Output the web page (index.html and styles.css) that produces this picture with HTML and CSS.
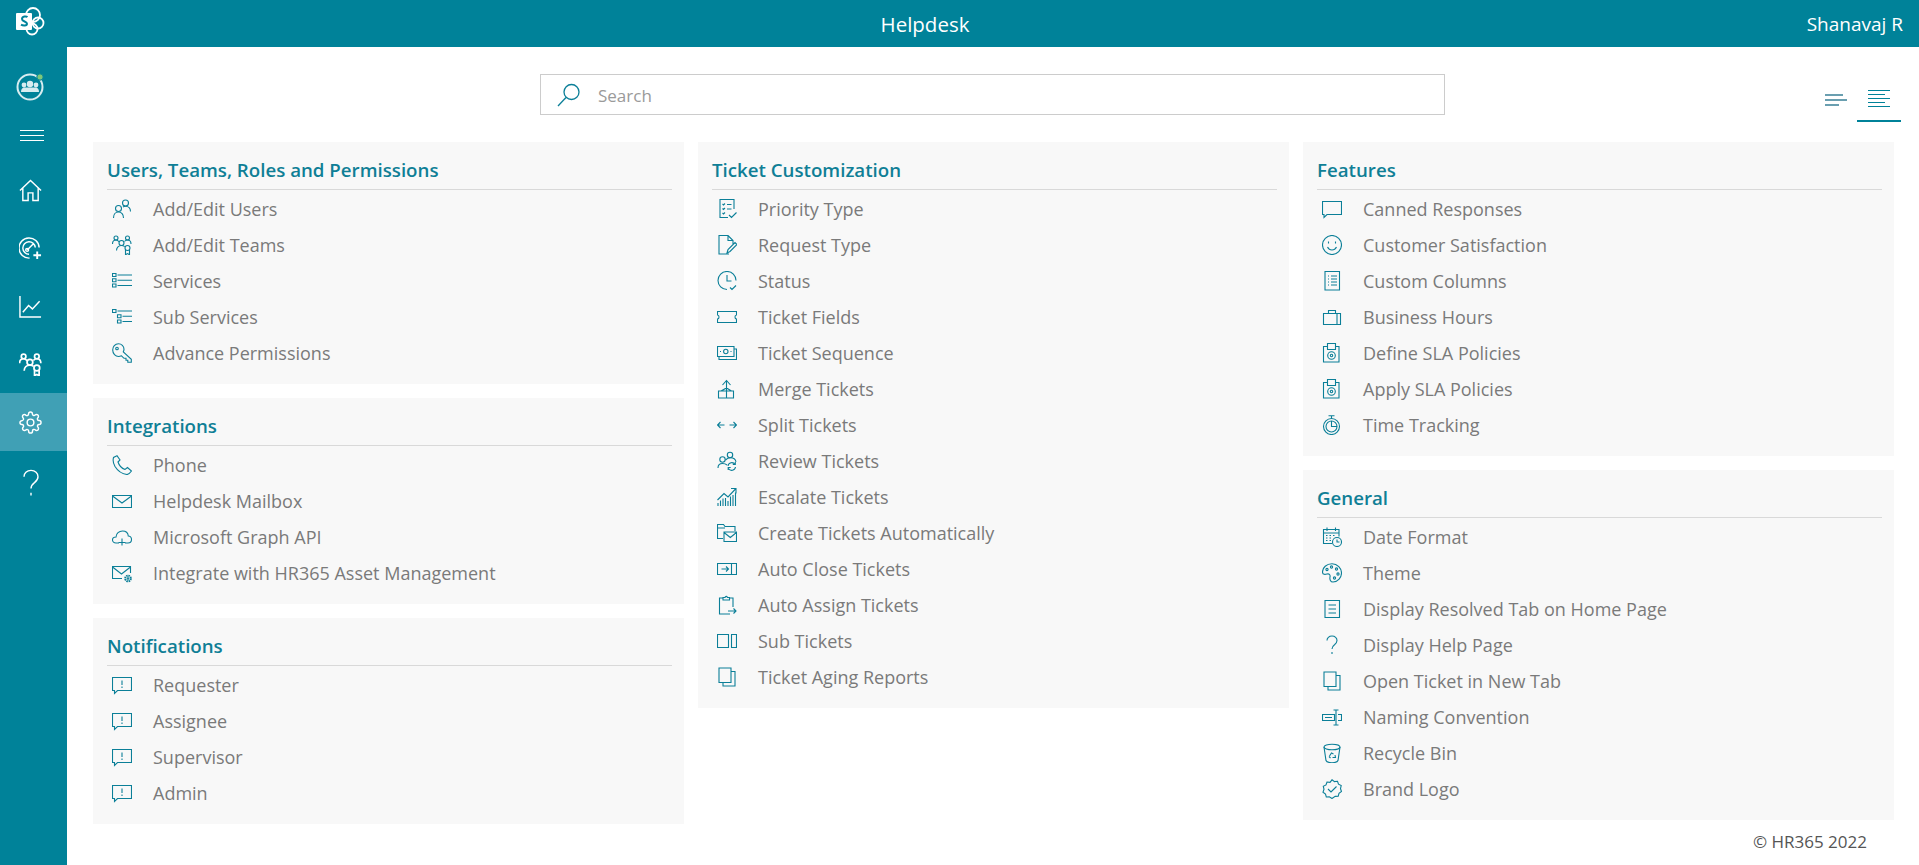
FILE: index.html
```html
<!DOCTYPE html>
<html lang="en">
<head>
    <meta charset="UTF-8">
    <title>Helpdesk</title>
    <link rel="stylesheet" href="styles.css">
</head>
<body>

<svg class="defs" width="0" height="0">
    <symbol id="users" viewBox="0 0 20 20"><circle cx="6.500" cy="9.500" r="3"/><path d="M1.500 19c0-3.500 2-6 5-6s5 2.500 5 6"/><circle cx="13.500" cy="4" r="3"/><path d="M11 8c.7-.6 1.500-.8 2.500-.8 3 0 5 2.300 5 5.300"/></symbol>
    <symbol id="team" viewBox="0 0 20 20"><circle cx="4" cy="3" r="2"/><circle cx="15.500" cy="3" r="2"/><circle cx="9.500" cy="8" r="2.500"/><path d="M.5 9c0-2.500 1.300-4 3.500-4 1.300 0 2.200.6 3 1.800M12.500 6.500c.7-1 1.700-1.500 3-1.500 2.200 0 3.500 1.500 3.500 4M4.500 15.500c0-3 2.200-5 5-5 1.300 0 2.300.4 3.200 1.200"/><circle cx="15.500" cy="13" r="2.500"/><path d="M13.500 15v4.800l2-1.200 2 1.200V15"/></symbol>
    <symbol id="list" viewBox="0 0 20 20"><path d="M.5 2.500h3.500v3H.5zM.5 7.800h3.500v3H.5zM.5 13h3.500v3H.5zM5.500 4H20M5.500 9.300H20M5.500 14.500H20"/></symbol>
    <symbol id="sublist" viewBox="0 0 20 20"><path d="M.5 2.500h3.500v3H.5zM5.500 7.800H9v3H5.500zM5.500 13H9v3H5.500zM5.500 4H20M10.500 9.300H20M10.500 14.500H20"/></symbol>
    <symbol id="key" viewBox="0 0 20 20"><path d="M6.500 .8c3 0 5.500 2.500 5.500 5.500 0 1-.3 1.800-.7 2.500l8 7.500v3h-3.500v-2H14v-2h-2l-2.500-2.500c-.8.4-2 .7-3 .7C3.500 13.500.7 10.500.7 7S3 .8 6.500 .8z"/><circle cx="5" cy="5.500" r="1.300"/></symbol>
    <symbol id="phone" viewBox="0 0 20 20"><path d="M5 .8 1.500 2.500C.8 5 1 8 3 11.500c2.500 4 7 7.500 12 8 1.500 0 3-1.500 4.500-3.500l-4-3.500-2.500 2c-3-1-6-4.500-7-7.500l2-2z"/></symbol>
    <symbol id="mail" viewBox="0 0 20 20"><path d="M.5 4.500h19v12H.5zM.5 5l9.500 7 9.500-7"/></symbol>
    <symbol id="cloud" viewBox="0 0 20 20"><path d="M7 16H4c-2 0-3.500-1.300-3.500-3S2 10 4 10c.2-3.500 3-6 6.500-6 3 0 5.500 2 5.800 5 2 .2 3.200 1.500 3.200 3.500S18 16 16 16h-3M10 11.500v7M6.500 15.500h7"/></symbol>
    <symbol id="mailgear" viewBox="0 0 20 20"><path d="M10 15.500H.5v-12h18V10M.5 4l9 7 9-7"/><circle cx="16" cy="15.500" r="2.800" stroke-width="2" stroke-dasharray="1.500 .7"/><circle cx="16" cy="15.500" r=".8"/></symbol>
    <symbol id="alert" viewBox="0 0 20 20"><path d="M.5 2.500h19v13H5.500l-3 3v-3h-2zM10 5.500V10M10 11.500v1.500"/></symbol>
    <symbol id="priority" viewBox="0 0 20 20"><path d="M17 10V.5H3v18h8M5.500 5l1 1 1.500-1.500M5.500 9.500l1 1L8 9M5.500 14l1 1L8 13.500M10 5.500h4.500M10 10h4.500M12 16l2.500 2.500 5-5"/></symbol>
    <symbol id="req" viewBox="0 0 20 20"><path d="M12 19H2V.5h9l5 5V9M11 .5v5h5M10 18l1-3.500 7-7 2 2-7 7z"/></symbol>
    <symbol id="status" viewBox="0 0 20 20"><path d="M10 18.500A9 9 0 1 1 19 9.500M10 4v6h4.500M13 16.500l2 2 4-4"/></symbol>
    <symbol id="ticket" viewBox="0 0 20 20"><path d="M.5 4.500h19V8c-1 0-1.500.7-1.500 2s.5 2 1.500 2v3.500H.5V12c1 0 1.500-.7 1.500-2S1.500 8 .5 8z"/></symbol>
    <symbol id="money" viewBox="0 0 20 20"><path d="M.5 3.500h16.500v10H.5zM2 13.500v3h17.500V6H17M3 8.500h1M13.500 8.500h1"/><circle cx="8.800" cy="8.500" r="2.200"/></symbol>
    <symbol id="merge" viewBox="0 0 20 20"><path d="M1.500 12h8v7h-8zM9.500 12h7v7h-7zM9.500 12V2M5.500 6l4-4.500 4 4.500M4 12l5.500-3 5 3"/></symbol>
    <symbol id="split" viewBox="0 0 20 20"><path d="M.5 10h7M3.500 7 .5 10l3 3M12.500 10h7M16.500 7l3 3-3 3"/></symbol>
    <symbol id="review" viewBox="0 0 20 20"><circle cx="5.500" cy="8.500" r="2.700"/><circle cx="13" cy="4" r="2.700"/><path d="M1 17c0-3 2-4.500 4.500-4.500S9 13 10 14M8.500 9c1-1 3-2.200 5-2.200 3 0 5 1.500 5.500 4M11 15a3.800 3.800 0 0 1 7-1.500M18.500 16a3.800 3.800 0 0 1-7 1.500M18.300 11v2.500h-2.500M11.200 19v-2.500h2.500"/></symbol>
    <symbol id="escalate" viewBox="0 0 20 20"><path d="M1 19v-3M3.500 19v-5.500M6 19v-7.500M8.500 19v-8M11 19v-5M13.500 19V9.500M16 19V8M18.500 19V5.500M.5 13 7 6.500 11 10l7.500-8M14 1.500h5v5"/></symbol>
    <symbol id="foldermail" viewBox="0 0 20 20"><path d="M6 15.500H.5V1.500h6l1.500 2h10V8M.5 5H8"/><path d="M7 9h12.500v9.500H7zM7 9.500l6.300 5 6.200-5"/></symbol>
    <symbol id="autoclose" viewBox="0 0 20 20"><path d="M.5 4.500h19v11H.5zM14.500 4.500v11M4.500 10h7M9 7.500l2.500 2.500L9 12.500"/></symbol>
    <symbol id="assign" viewBox="0 0 20 20"><path d="M6 3H2.500v16H13M16 12V3h-3.500M6 5V2.500h2C8.500 1 9.800 1 10.500 2.500h2V5zM11 16h8M16.500 13.500 19 16l-2.500 2.500"/></symbol>
    <symbol id="sub" viewBox="0 0 20 20"><path d="M.5 3.500h11v13H.5zM14.500 3.500h5v13h-5z"/></symbol>
    <symbol id="copy" viewBox="0 0 20 20"><path d="M2 1h12v14.500H2zM14 4.500h4V19H6v-3.500"/></symbol>
    <symbol id="chat" viewBox="0 0 20 20"><path d="M.5 2.500h19v13H5l-3 3v-3H.5z"/></symbol>
    <symbol id="smile" viewBox="0 0 20 20"><circle cx="10" cy="10" r="9.500"/><path d="M5.500 12c1 2 2.500 3 4.500 3s3.500-1 4.500-3M6.500 6.500v2M13.500 6.500v2"/></symbol>
    <symbol id="columns" viewBox="0 0 20 20"><path d="M3 .5h14.500v18.500H3zM6 5h1M9 5h6M6 8h1M9 8h6M6 11h1M9 11h6M6 14h1M9 14h6"/></symbol>
    <symbol id="brief" viewBox="0 0 20 20"><path d="M1.500 6.500h17v11h-17zM6.500 6.500v-3h7v3M15 6.500v11"/></symbol>
    <symbol id="sla" viewBox="0 0 20 20"><path d="M5.500 3.500h-4V19h15.500V3.500h-3M5.500 6.500V.5h8v6z"/><circle cx="9.500" cy="12.500" r="3.800"/><circle cx="9.500" cy="12.500" r="1.200"/></symbol>
    <symbol id="timer" viewBox="0 0 20 20"><path d="M6.500 .8h6M9.500 .8v3"/><circle cx="9.500" cy="11.500" r="8"/><circle cx="9.500" cy="11.500" r="5.500"/><path d="M9.500 6v5.500H15"/></symbol>
    <symbol id="calendar" viewBox="0 0 20 20"><path d="M10 16.500H1.500V2.500h15.500v7M1.500 6h15.500M5 .5v3.500M13.500 .5v3.500M4 8.500h1.500M7.500 8.500H9M11 8.500h1.500M4 11h1.500M7.500 11H9M4 13.500h1.500M7.500 13.500H9"/><circle cx="15" cy="15" r="4.500"/><path d="M15 12.500V15h2.500"/></symbol>
    <symbol id="palette" viewBox="0 0 20 20"><path d="M10 .8C4.500 .8.500 4.500.5 9c0 3 3 2.500 4.500 2 2-.5 3.500.5 3 3-.5 2.500.5 5 3 5 5 0 8.500-4.500 8.500-9S15.500 .8 10 .8z"/><circle cx="5" cy="6.500" r="1.100"/><circle cx="9.500" cy="4" r="1.100"/><circle cx="14.500" cy="6" r="1.100"/><circle cx="16" cy="11" r="1.100"/><circle cx="12.500" cy="15" r="1.100"/></symbol>
    <symbol id="doc" viewBox="0 0 20 20"><path d="M3 1.500h14.500v17H3zM6.500 6h7.500M6.500 10h7.500M6.500 14h7.500"/></symbol>
    <symbol id="question" viewBox="0 0 20 20"><path d="M5 5.500C5 3 7 1 10 1s5 2 5 4.500c0 2-1 3-2.500 4.200-1.500 1.100-2.500 2-2.500 4.300M10 17v2"/></symbol>
    <symbol id="naming" viewBox="0 0 20 20"><path d="M.5 7.500h12v6H.5zM3 10.500h7M14 3v15M11.500 3h5M11.500 18h5M16 7.500h3.500v6H16"/></symbol>
    <symbol id="bin" viewBox="0 0 20 20"><ellipse cx="10" cy="4" rx="8" ry="2.800"/><path d="M2 4l2 13.500c.5 1.500 3 2.200 6 2.200s5.500-.7 6-2.200L18 4M7.500 13l2-3 2 1M13 12l.5 2.500h-3M7 13.500l1.500 1.500"/></symbol>
    <symbol id="brand" viewBox="0 0 20 20"><path d="M10 .8l2.500 1.800 3-.3 1 2.900 2.700 1.400-.7 3 1 2.900-2.500 1.800-.8 3-3 .1L10 19.500l-2.700-1.600-3 .1-.8-3-2.500-1.800 1-2.900-.7-3 2.700-1.400 1-2.900 3 .3z"/><path d="M6 10l3 3 5.500-5.500"/></symbol>
    <symbol id="home" viewBox="0 0 24 24"><path d="M1 12 12 1.500 23 12M4 9.500V22.500h5.500v-8h5v8H20V9.500"/></symbol>
    <symbol id="gauge" viewBox="0 0 24 24"><path d="M21 11A10.500 10.500 0 1 0 11 22M17 11a6.500 6.500 0 1 0-6.500 7M8.500 13.500l6-6"/><circle cx="8.500" cy="13.500" r="1.500"/><path d="M19 15v8M15 19h8" stroke-width="2"/></symbol>
    <symbol id="chart" viewBox="0 0 24 24"><path d="M1 1v22h22M4 18l6-7 4 3.500 7.500-8"/></symbol>
    <symbol id="gear" viewBox="0 0 24 24"><circle cx="12" cy="12" r="3.500"/><path d="M19.400 15a1.650 1.650 0 0 0 .33 1.820l.06.06a2 2 0 0 1 0 2.830 2 2 0 0 1-2.830 0l-.06-.06a1.650 1.650 0 0 0-1.820-.33 1.650 1.650 0 0 0-1 1.510V21a2 2 0 0 1-2 2 2 2 0 0 1-2-2v-.09A1.650 1.650 0 0 0 9 19.400a1.650 1.650 0 0 0-1.820.33l-.06.06a2 2 0 0 1-2.830 0 2 2 0 0 1 0-2.830l.06-.06a1.650 1.650 0 0 0 .33-1.820 1.650 1.650 0 0 0-1.510-1H3a2 2 0 0 1-2-2 2 2 0 0 1 2-2h.09A1.650 1.650 0 0 0 4.600 9a1.650 1.650 0 0 0-.33-1.820l-.06-.06a2 2 0 0 1 0-2.830 2 2 0 0 1 2.830 0l.06.06a1.650 1.650 0 0 0 1.820.33H9a1.650 1.650 0 0 0 1-1.510V3a2 2 0 0 1 2-2 2 2 0 0 1 2 2v.09a1.650 1.650 0 0 0 1 1.510 1.650 1.650 0 0 0 1.820-.33l.06-.06a2 2 0 0 1 2.830 0 2 2 0 0 1 0 2.830l-.06.06a1.650 1.650 0 0 0-.33 1.820V9a1.650 1.650 0 0 0 1.510 1H21a2 2 0 0 1 2 2 2 2 0 0 1-2 2h-.09a1.650 1.650 0 0 0-1.510 1z"/></symbol>
</svg>

<aside class="sidebar">
    <div class="logo">
        <svg width="30" height="30" viewBox="0 0 30 30">
            <circle cx="18" cy="8" r="7" fill="none" stroke="#fff" stroke-width="1.800"/>
            <circle cx="23" cy="16" r="5.500" fill="none" stroke="#fff" stroke-width="1.800"/>
            <circle cx="17" cy="22" r="5.500" fill="none" stroke="#fff" stroke-width="1.800"/>
            <rect x="1" y="6" width="16" height="17" rx="1" fill="#fff"/>
            <path d="M12.500 10c-1-.8-5.500-1.200-5.500 2 0 2.800 5 2.200 5 4.700 0 2.300-4 2.200-6 1" fill="none" stroke="#00829b" stroke-width="2"/>
        </svg>
    </div>
    <div class="avatar">
        <svg width="30" height="30" viewBox="0 0 30 30">
            <circle cx="15" cy="15" r="12.500" fill="none" stroke="#d7ecf0" stroke-width="2"/>
            <circle cx="15" cy="12" r="3.200" fill="#d7ecf0"/>
            <circle cx="9" cy="13" r="2.400" fill="#d7ecf0"/>
            <circle cx="21" cy="13" r="2.400" fill="#d7ecf0"/>
            <path d="M6 20c0-3 1.500-4.500 3-4.500h12c1.500 0 3 1.500 3 4.500z" fill="#d7ecf0"/>
            <circle cx="25" cy="5" r="3.200" fill="#7fc77a" stroke="#008299"/>
        </svg>
    </div>
    <div class="burger"><span></span><span></span><span></span></div>
    <a class="nav-item"><svg class="nav-ic"><use href="#home"/></svg></a>
    <a class="nav-item"><svg class="nav-ic"><use href="#gauge"/></svg></a>
    <a class="nav-item"><svg class="nav-ic"><use href="#chart"/></svg></a>
    <a class="nav-item"><svg class="nav-ic"><use href="#team"/></svg></a>
    <a class="nav-item active"><svg class="nav-ic"><use href="#gear"/></svg></a>
    <a class="nav-item"><svg class="nav-ic tall"><use href="#question"/></svg></a>
</aside>

<div class="page">
    <header class="topbar">
        <div class="app-title">Helpdesk</div>
        <div class="user-name">Shanavaj R</div>
    </header>

    <main class="content">
        <div class="search-row">
            <div></div>
            <div class="search-box">
                <svg class="search-ic" viewBox="0 0 24 24"><circle cx="14.500" cy="9" r="7.500"/><path d="M9 14.500 1 23"/></svg>
                <span class="search-text">Search</span>
            </div>
            <div class="view-toggle">
                <div class="toggle-btn">
                    <span class="ln w18"></span><span class="ln w22"></span><span class="ln w14"></span>
                </div>
                <div class="toggle-btn active">
                    <span class="ln w22"></span><span class="ln w17"></span><span class="ln w22"></span><span class="ln w17"></span><span class="ln w22"></span>
                </div>
            </div>
        </div>

        <div class="columns">
            <div class="col">
                <section class="card">
                    <h2>Users, Teams, Roles and Permissions</h2>
                    <a class="row"><svg class="ic"><use href="#users"/></svg>Add/Edit Users</a>
                    <a class="row"><svg class="ic"><use href="#team"/></svg>Add/Edit Teams</a>
                    <a class="row"><svg class="ic"><use href="#list"/></svg>Services</a>
                    <a class="row"><svg class="ic"><use href="#sublist"/></svg>Sub Services</a>
                    <a class="row"><svg class="ic"><use href="#key"/></svg>Advance Permissions</a>
                </section>
                <section class="card">
                    <h2>Integrations</h2>
                    <a class="row"><svg class="ic"><use href="#phone"/></svg>Phone</a>
                    <a class="row"><svg class="ic"><use href="#mail"/></svg>Helpdesk Mailbox</a>
                    <a class="row"><svg class="ic"><use href="#cloud"/></svg>Microsoft Graph API</a>
                    <a class="row"><svg class="ic"><use href="#mailgear"/></svg>Integrate with HR365 Asset Management</a>
                </section>
                <section class="card">
                    <h2>Notifications</h2>
                    <a class="row"><svg class="ic"><use href="#alert"/></svg>Requester</a>
                    <a class="row"><svg class="ic"><use href="#alert"/></svg>Assignee</a>
                    <a class="row"><svg class="ic"><use href="#alert"/></svg>Supervisor</a>
                    <a class="row"><svg class="ic"><use href="#alert"/></svg>Admin</a>
                </section>
            </div>

            <div class="col">
                <section class="card">
                    <h2>Ticket Customization</h2>
                    <a class="row"><svg class="ic"><use href="#priority"/></svg>Priority Type</a>
                    <a class="row"><svg class="ic"><use href="#req"/></svg>Request Type</a>
                    <a class="row"><svg class="ic"><use href="#status"/></svg>Status</a>
                    <a class="row"><svg class="ic"><use href="#ticket"/></svg>Ticket Fields</a>
                    <a class="row"><svg class="ic"><use href="#money"/></svg>Ticket Sequence</a>
                    <a class="row"><svg class="ic"><use href="#merge"/></svg>Merge Tickets</a>
                    <a class="row"><svg class="ic"><use href="#split"/></svg>Split Tickets</a>
                    <a class="row"><svg class="ic"><use href="#review"/></svg>Review Tickets</a>
                    <a class="row"><svg class="ic"><use href="#escalate"/></svg>Escalate Tickets</a>
                    <a class="row"><svg class="ic"><use href="#foldermail"/></svg>Create Tickets Automatically</a>
                    <a class="row"><svg class="ic"><use href="#autoclose"/></svg>Auto Close Tickets</a>
                    <a class="row"><svg class="ic"><use href="#assign"/></svg>Auto Assign Tickets</a>
                    <a class="row"><svg class="ic"><use href="#sub"/></svg>Sub Tickets</a>
                    <a class="row"><svg class="ic"><use href="#copy"/></svg>Ticket Aging Reports</a>
                </section>
            </div>

            <div class="col">
                <section class="card">
                    <h2>Features</h2>
                    <a class="row"><svg class="ic"><use href="#chat"/></svg>Canned Responses</a>
                    <a class="row"><svg class="ic"><use href="#smile"/></svg>Customer Satisfaction</a>
                    <a class="row"><svg class="ic"><use href="#columns"/></svg>Custom Columns</a>
                    <a class="row"><svg class="ic"><use href="#brief"/></svg>Business Hours</a>
                    <a class="row"><svg class="ic"><use href="#sla"/></svg>Define SLA Policies</a>
                    <a class="row"><svg class="ic"><use href="#sla"/></svg>Apply SLA Policies</a>
                    <a class="row"><svg class="ic"><use href="#timer"/></svg>Time Tracking</a>
                </section>
                <section class="card">
                    <h2>General</h2>
                    <a class="row"><svg class="ic"><use href="#calendar"/></svg>Date Format</a>
                    <a class="row"><svg class="ic"><use href="#palette"/></svg>Theme</a>
                    <a class="row"><svg class="ic"><use href="#doc"/></svg>Display Resolved Tab on Home Page</a>
                    <a class="row"><svg class="ic"><use href="#question"/></svg>Display Help Page</a>
                    <a class="row"><svg class="ic"><use href="#copy"/></svg>Open Ticket in New Tab</a>
                    <a class="row"><svg class="ic"><use href="#naming"/></svg>Naming Convention</a>
                    <a class="row"><svg class="ic"><use href="#bin"/></svg>Recycle Bin</a>
                    <a class="row"><svg class="ic"><use href="#brand"/></svg>Brand Logo</a>
                </section>
                <div class="copyright">© HR365 2022</div>
            </div>
        </div>
    </main>
</div>

</body>
</html>
```

FILE: styles.css
```css
html, body {
    height: 100%;
}

body {
    margin: 0;
    display: flex;
    height: 865px;
    overflow: hidden;
    font-family: "Open Sans", "Noto Sans", sans-serif;
    color: #7a7a7a;
    background-color: #ffffff;
}

.defs {
    position: absolute;
}

/* left rail */
.sidebar {
    width: 67px;
    flex-shrink: 0;
    background-color: #008299;
    color: #ffffff;
    display: flex;
    flex-direction: column;
}

.logo {
    height: 47px;
    padding-left: 15px;
    padding-top: 7px;
    box-sizing: border-box;
}

.avatar {
    height: 66px;
    padding: 25px 0 0 15px;
    box-sizing: border-box;
}

.burger {
    height: 48px;
    padding: 17px 0 0 20px;
    box-sizing: border-box;
    display: flex;
    flex-direction: column;
    gap: 4px;
}

.burger span {
    display: block;
    width: 24px;
    height: 1px;
    background-color: #ffffff;
}

.nav-item {
    height: 58px;
    display: flex;
    align-items: center;
    padding-left: 19px;
}

.nav-item.active {
    background-color: #40a0b5;
}

.nav-ic {
    width: 23px;
    height: 23px;
    fill: none;
    stroke: currentColor;
    stroke-width: 1.500;
}

.nav-ic.tall {
    width: 28px;
    height: 28px;
    margin: 6px 0 0 -2px;
    stroke-width: 1;
}

/* right side */
.page {
    flex: 1;
    min-width: 0;
    display: flex;
    flex-direction: column;
}

.topbar {
    height: 47px;
    flex-shrink: 0;
    background-color: #008299;
    color: #ffffff;
    display: flex;
    align-items: center;
}

.app-title {
    flex: 1;
    text-align: center;
    font-size: 20.500px;
}

.user-name {
    width: 136px;
    box-sizing: border-box;
    padding-right: 16px;
    text-align: right;
    font-size: 19px;
    white-space: nowrap;
}

.content {
    padding: 0 24px 0 26px;
}

.search-row {
    height: 95px;
    display: grid;
    grid-template-columns: 1fr 905px 1fr;
    margin-right: 3px;
}

.search-box {
    height: 41px;
    margin-top: 27px;
    box-sizing: border-box;
    border: 1px solid #cccccc;
    display: flex;
    align-items: center;
    padding-left: 16px;
}

.search-ic {
    width: 24px;
    height: 24px;
    fill: none;
    stroke: #0b7f98;
    stroke-width: 1.300;
    margin-right: 17px;
}

.search-text {
    font-size: 17px;
    padding-top: 2px;
    color: #9a9a9a;
}

.view-toggle {
    display: flex;
    justify-content: flex-end;
    align-items: flex-end;
    gap: 10px;
    padding-bottom: 20px;
    margin-right: -9px;
}

.toggle-btn {
    display: flex;
    flex-direction: column;
    gap: 3px;
    align-items: flex-start;
    width: 22px;
    padding-bottom: 16px;
}

.toggle-btn .ln {
    display: block;
    height: 2px;
    background-color: #6a9fb0;
}

.toggle-btn.active {
    width: 44px;
    box-sizing: border-box;
    padding: 0 11px 13px;
    gap: 3px;
    border-bottom: 2px solid #008299;
}

.toggle-btn.active .ln {
    height: 1px;
    background-color: #008299;
}

.w14 { width: 14px; }
.w17 { width: 17px; }
.w18 { width: 18px; }
.w22 { width: 22px; }

/* the three columns of cards */
.columns {
    display: grid;
    grid-template-columns: repeat(3, 591px);
    column-gap: 14px;
    align-items: start;
}

.col {
    display: flex;
    flex-direction: column;
    gap: 14px;
}

.card {
    background-color: #f8f8f8;
    padding: 0 12px 13px 14px;
}

.card h2 {
    margin: 0 0 1px;
    height: 48px;
    line-height: 33px;
    padding-top: 11px;
    box-sizing: border-box;
    border-bottom: 1px solid #d9d9d9;
    font-size: 18.700px;
    font-weight: 600;
    color: #0f7f96;
}

.row {
    display: flex;
    align-items: center;
    height: 36px;
    font-size: 18px;
    color: #7a7a7a;
    white-space: nowrap;
}

.ic {
    width: 20px;
    height: 20px;
    margin: 0 21px 0 5px;
    flex-shrink: 0;
    fill: none;
    stroke: #0b7f98;
    stroke-width: 1.100;
}

.copyright {
    margin-top: -4px;
    text-align: right;
    padding-right: 27px;
    font-size: 17px;
    color: #555555;
}
```
